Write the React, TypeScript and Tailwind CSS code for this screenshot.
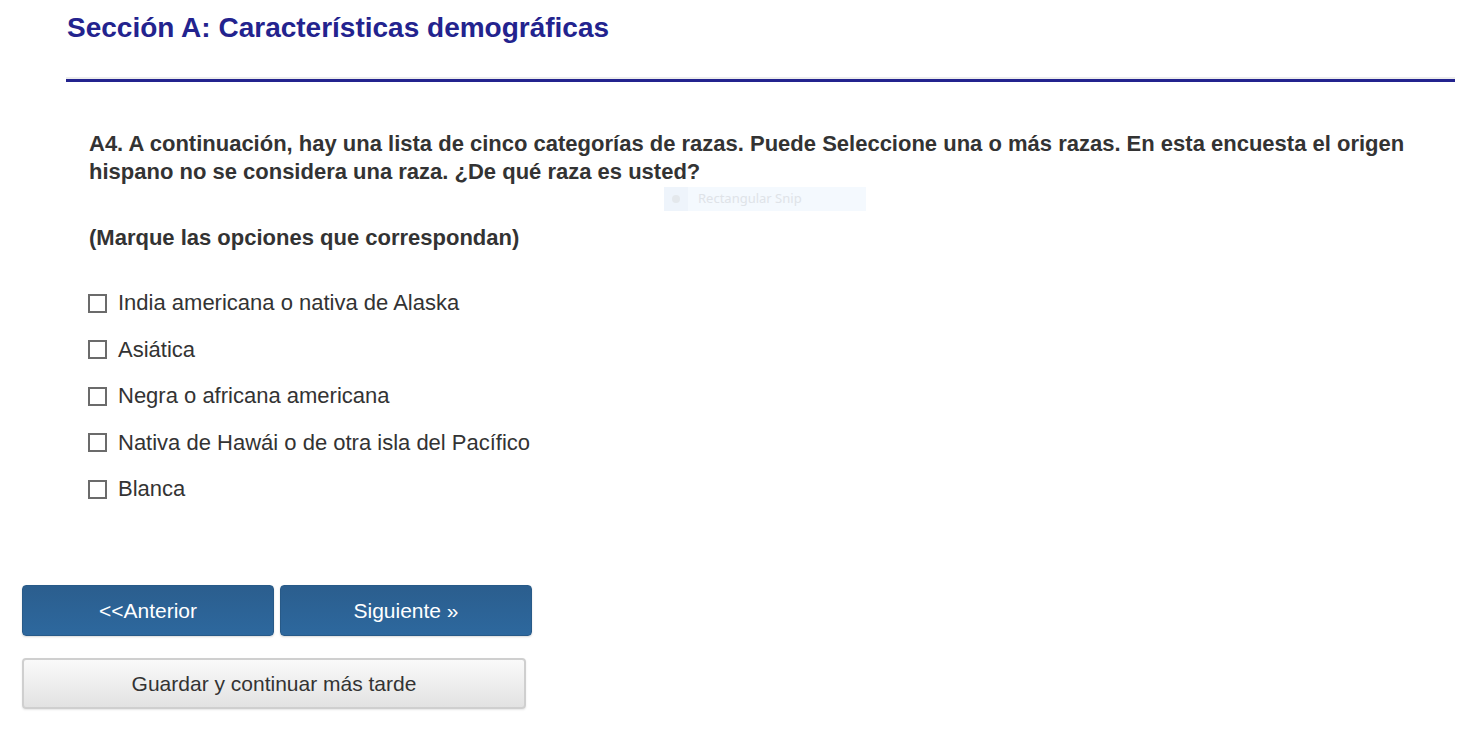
import * as React from 'react';

const options = [
    'India americana o nativa de Alaska',
    'Asiática',
    'Negra o africana americana',
    'Nativa de Hawái o de otra isla del Pacífico',
    'Blanca',
];

export default function App() {
    const [checked, setChecked] = React.useState<boolean[]>(options.map(() => false));

    return (
        <div className="relative w-[1478px] h-[736px] bg-white [font-family:'Liberation_Sans',Arial,sans-serif] text-[#333333] overflow-hidden">
            {/* header */}
            <div className="pl-[66px] pr-[23px] pt-[12px]">
                <h1 className="text-[28px] leading-[32px] font-bold text-[#23238e] pl-px">
                    Sección A: Características demográficas
                </h1>
                <div className="mt-[33px] h-[2px] bg-[#ececec]" />
                <div className="h-[3px] bg-[#23238e]" />
            </div>

            {/* question */}
            <div className="pl-[89px] pr-[60px] pt-[48px]">
                <p className="text-[22px] leading-[28px] font-bold">
                    A4. A continuación, hay una lista de cinco categorías de razas. Puede Seleccione una o más razas. En esta encuesta el origen hispano no se considera una raza. ¿De qué raza es usted?
                </p>
                <p className="mt-[38px] text-[22px] leading-[28px] font-bold">
                    (Marque las opciones que correspondan)
                </p>

                <ul className="mt-[37px] -ml-px flex flex-col gap-[18.5px]">
                    {options.map((opt, i) => (
                        <li key={i}>
                            <label className="flex items-center gap-[11px] cursor-pointer">
                                <input
                                    type="checkbox"
                                    className="appearance-none w-[19px] h-[19px] border-2 border-[#6b6b6b] bg-white checked:bg-[#2c6496] shrink-0 cursor-pointer"
                                    checked={checked[i]}
                                    onChange={() =>
                                        setChecked((c) => c.map((v, j) => (j === i ? !v : v)))
                                    }
                                />
                                <span className="text-[22px] leading-[28px]">{opt}</span>
                            </label>
                        </li>
                    ))}
                </ul>
            </div>

            {/* buttons */}
            <div className="pl-[22px] pt-[82px]">
                <div className="flex gap-[6px]">
                    <button className="w-[252px] h-[51px] rounded-[4px] border border-[#285a88] bg-gradient-to-b from-[#2b5e8e] to-[#2d689e] text-white text-[21px] shadow-[0_1px_2px_rgba(0,0,0,0.15)]">
                        &lt;&lt;Anterior
                    </button>
                    <button className="w-[252px] h-[51px] rounded-[4px] border border-[#285a88] bg-gradient-to-b from-[#2b5e8e] to-[#2d689e] text-white text-[21px] shadow-[0_1px_2px_rgba(0,0,0,0.15)]">
                        Siguiente »
                    </button>
                </div>
                <button className="mt-[22px] w-[504px] h-[51px] rounded-[4px] border-2 border-[#cfcfcf] bg-gradient-to-b from-[#fafafa] to-[#e2e2e2] text-[#333333] text-[21px] shadow-[0_1px_2px_rgba(0,0,0,0.1)]">
                    Guardar y continuar más tarde
                </button>
            </div>

            {/* snipping tool overlay */}
            <div className="absolute left-[664px] top-[187px] w-[202px] h-[24px] bg-[#f4f9fe] flex items-center text-[13px] text-[#dfe3e8] [font-family:'Noto_Sans',sans-serif]">
                <div className="w-[24px] h-full bg-[#eef4fb] flex items-center justify-center">
                    <div className="w-[8px] h-[8px] rounded-full bg-[#e4e8ec]" />
                </div>
                <span className="pl-[10px]">Rectangular Snip</span>
            </div>
        </div>
    );
}
